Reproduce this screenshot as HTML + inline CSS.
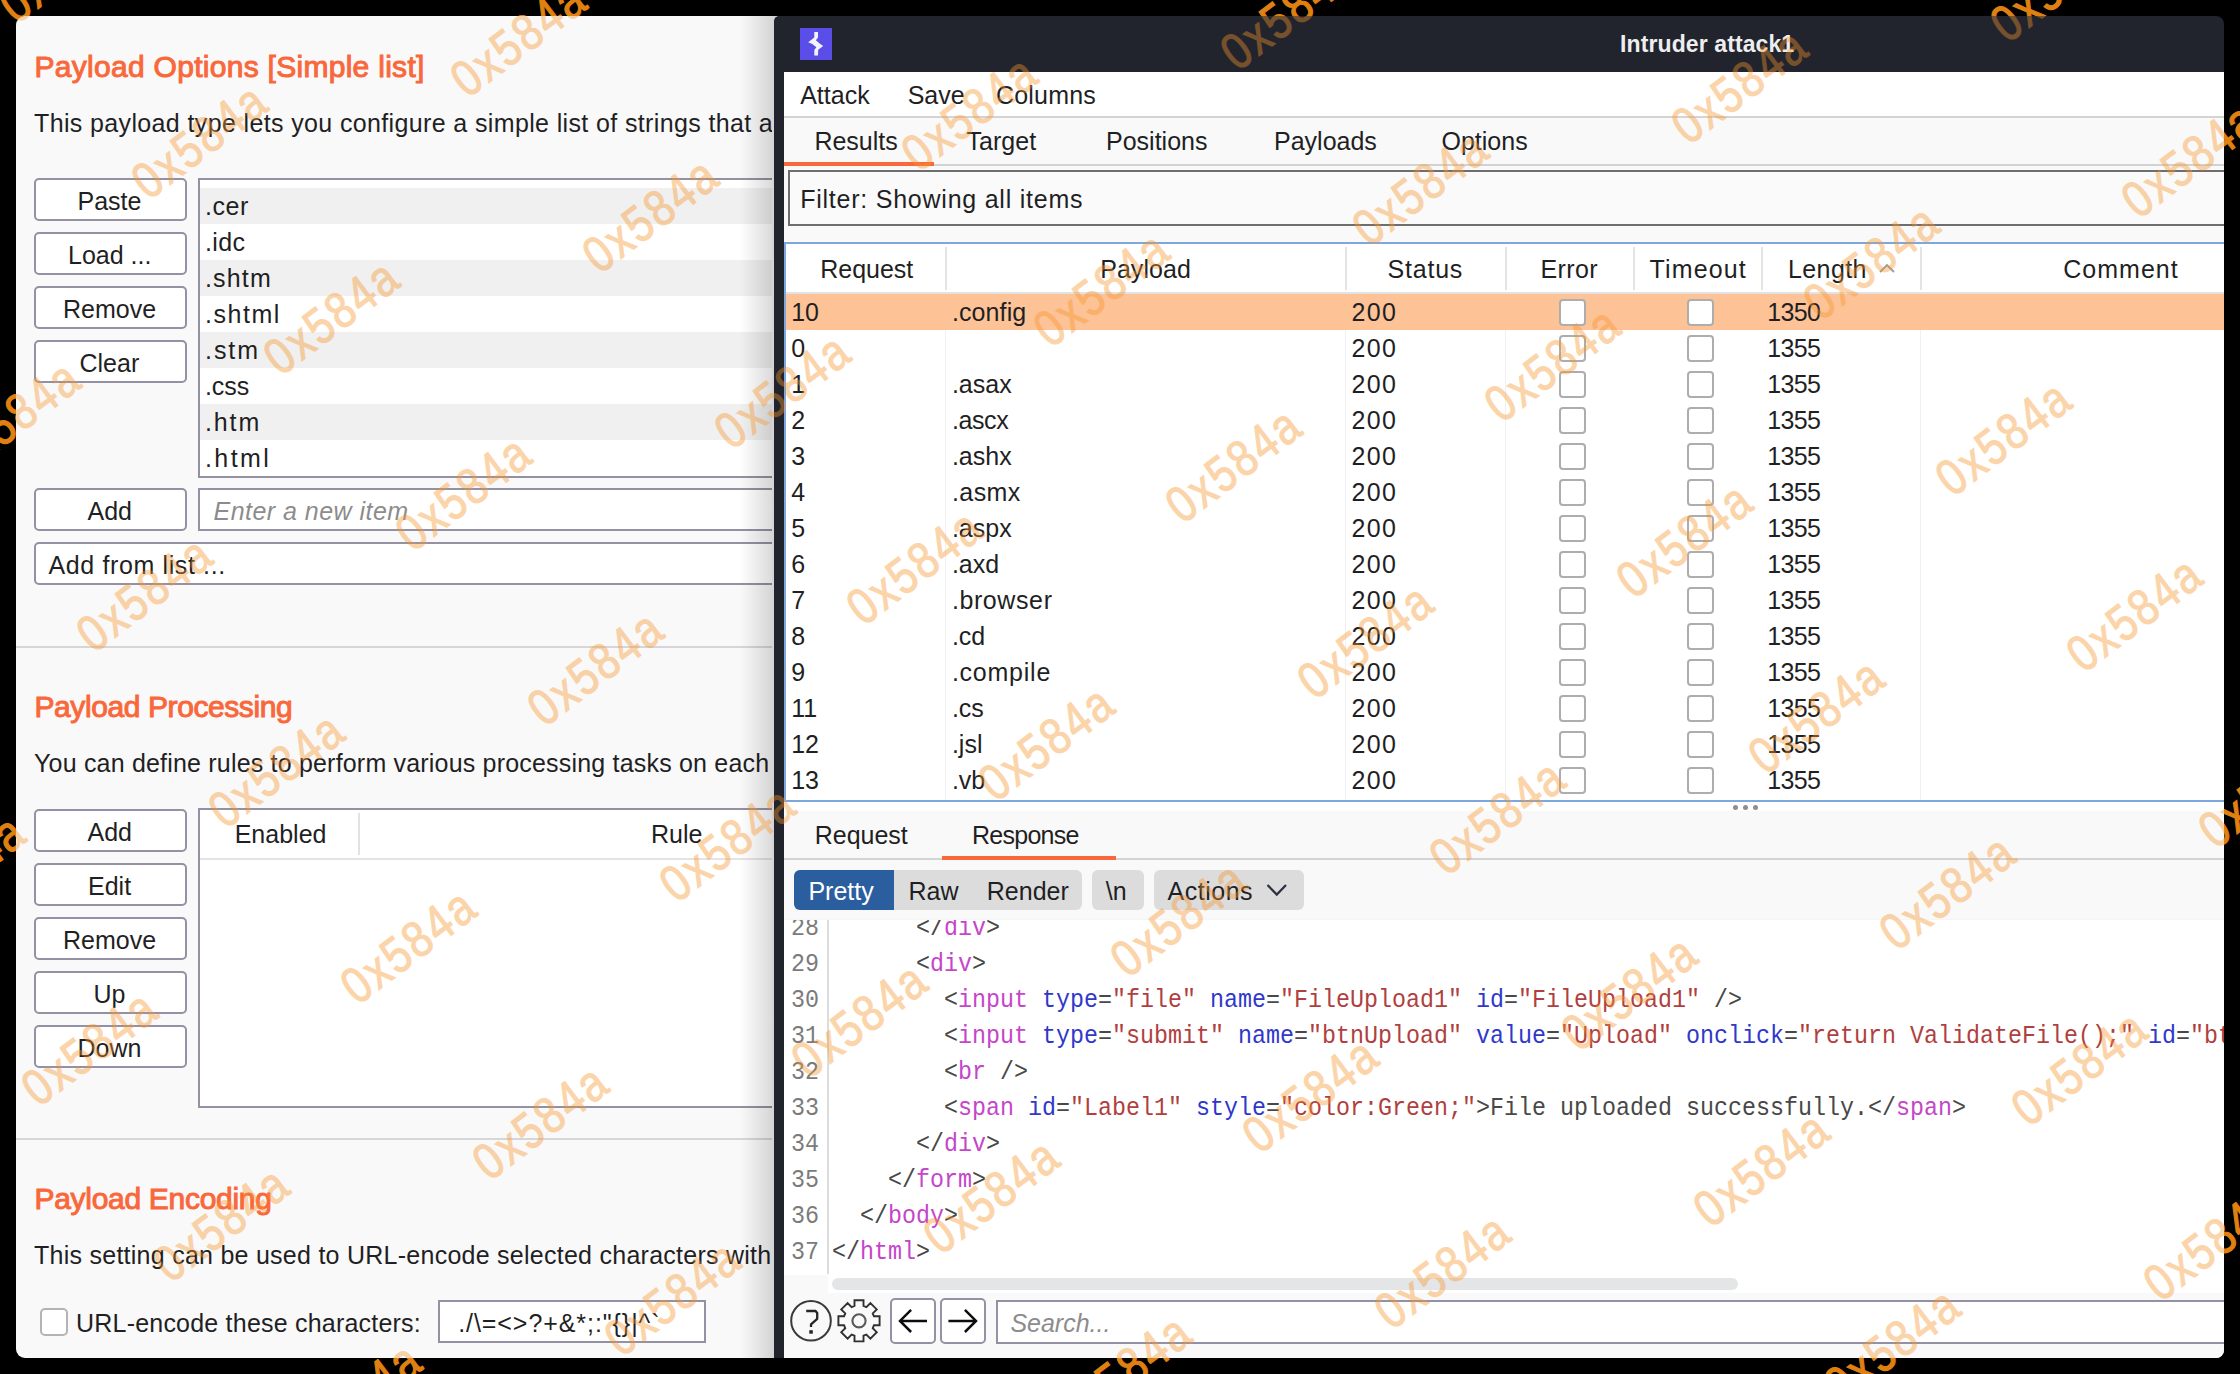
<!DOCTYPE html>
<html><head><meta charset="utf-8"><title>Intruder attack1</title>
<style>
html,body{margin:0;padding:0;overflow:hidden;}
body{width:2240px;height:1374px;background:#000;position:relative;overflow:hidden;font-family:"Liberation Sans", sans-serif;}
.t{position:absolute;white-space:pre;line-height:0;height:0;}
.m{position:absolute;white-space:pre;line-height:0;height:0;font-family:"Liberation Mono", monospace;font-size:25.4px;transform:scaleX(0.91864);transform-origin:0 0;}
.r{position:absolute;}
.clip{position:absolute;overflow:hidden;}
.panel{position:absolute;background:#f9f9fa;border-radius:9px;overflow:hidden;}
.win{position:absolute;background:#21242d;border-radius:9px;}
.wma,.wmb{position:absolute;width:200px;height:60px;line-height:60px;text-align:center;font-size:51px;transform:rotate(-37deg) scaleX(0.84);letter-spacing:2.8px;white-space:pre;pointer-events:none;-webkit-text-stroke:1.1px currentColor;}
.wma{color:rgb(208,114,0);}
.wmb{color:rgb(247,150,44);}
#wB{opacity:0.4;}
#wA,#wB{position:absolute;left:0;top:0;width:2240px;height:1374px;overflow:hidden;}
#ui{position:absolute;left:0;top:0;width:2240px;height:1374px;}
.layer{position:absolute;left:0;top:0;width:2240px;height:1374px;}
</style></head>
<body>
<div id="wA">
<div class="wma" style="left:-32.0px;top:-65.4px">0x584a</div>
<div class="wma" style="left:287.0px;top:-167.1px">0x584a</div>
<div class="wma" style="left:-218.9px;top:212.2px">0x584a</div>
<div class="wma" style="left:100.0px;top:110.5px">0x584a</div>
<div class="wma" style="left:418.9px;top:8.9px">0x584a</div>
<div class="wma" style="left:737.8px;top:-92.7px">0x584a</div>
<div class="wma" style="left:-87.0px;top:388.1px">0x584a</div>
<div class="wma" style="left:231.9px;top:286.5px">0x584a</div>
<div class="wma" style="left:550.8px;top:184.9px">0x584a</div>
<div class="wma" style="left:869.8px;top:83.3px">0x584a</div>
<div class="wma" style="left:1188.7px;top:-18.4px">0x584a</div>
<div class="wma" style="left:1507.6px;top:-120.0px">0x584a</div>
<div class="wma" style="left:45.0px;top:564.1px">0x584a</div>
<div class="wma" style="left:363.9px;top:462.5px">0x584a</div>
<div class="wma" style="left:682.8px;top:360.9px">0x584a</div>
<div class="wma" style="left:1001.7px;top:259.2px">0x584a</div>
<div class="wma" style="left:1320.6px;top:157.6px">0x584a</div>
<div class="wma" style="left:1639.6px;top:56.0px">0x584a</div>
<div class="wma" style="left:1958.5px;top:-45.6px">0x584a</div>
<div class="wma" style="left:2277.4px;top:-147.2px">0x584a</div>
<div class="wma" style="left:-142.0px;top:841.7px">0x584a</div>
<div class="wma" style="left:176.9px;top:740.1px">0x584a</div>
<div class="wma" style="left:495.8px;top:638.4px">0x584a</div>
<div class="wma" style="left:814.8px;top:536.8px">0x584a</div>
<div class="wma" style="left:1133.7px;top:435.2px">0x584a</div>
<div class="wma" style="left:1452.6px;top:333.6px">0x584a</div>
<div class="wma" style="left:1771.5px;top:232.0px">0x584a</div>
<div class="wma" style="left:2090.4px;top:130.3px">0x584a</div>
<div class="wma" style="left:-10.1px;top:1017.7px">0x584a</div>
<div class="wma" style="left:308.9px;top:916.0px">0x584a</div>
<div class="wma" style="left:627.8px;top:814.4px">0x584a</div>
<div class="wma" style="left:946.7px;top:712.8px">0x584a</div>
<div class="wma" style="left:1265.6px;top:611.2px">0x584a</div>
<div class="wma" style="left:1584.5px;top:509.5px">0x584a</div>
<div class="wma" style="left:1903.5px;top:407.9px">0x584a</div>
<div class="wma" style="left:2222.4px;top:306.3px">0x584a</div>
<div class="wma" style="left:-197.0px;top:1295.2px">0x584a</div>
<div class="wma" style="left:121.9px;top:1193.6px">0x584a</div>
<div class="wma" style="left:440.8px;top:1092.0px">0x584a</div>
<div class="wma" style="left:759.7px;top:990.4px">0x584a</div>
<div class="wma" style="left:1078.7px;top:888.8px">0x584a</div>
<div class="wma" style="left:1397.6px;top:787.1px">0x584a</div>
<div class="wma" style="left:1716.5px;top:685.5px">0x584a</div>
<div class="wma" style="left:2035.4px;top:583.9px">0x584a</div>
<div class="wma" style="left:-65.1px;top:1471.2px">0x584a</div>
<div class="wma" style="left:253.8px;top:1369.6px">0x584a</div>
<div class="wma" style="left:572.8px;top:1268.0px">0x584a</div>
<div class="wma" style="left:891.7px;top:1166.3px">0x584a</div>
<div class="wma" style="left:1210.6px;top:1064.7px">0x584a</div>
<div class="wma" style="left:1529.5px;top:963.1px">0x584a</div>
<div class="wma" style="left:1848.4px;top:861.5px">0x584a</div>
<div class="wma" style="left:2167.4px;top:759.9px">0x584a</div>
<div class="wma" style="left:704.7px;top:1443.9px">0x584a</div>
<div class="wma" style="left:1023.6px;top:1342.3px">0x584a</div>
<div class="wma" style="left:1342.5px;top:1240.7px">0x584a</div>
<div class="wma" style="left:1661.5px;top:1139.1px">0x584a</div>
<div class="wma" style="left:1980.4px;top:1037.5px">0x584a</div>
<div class="wma" style="left:2299.3px;top:935.8px">0x584a</div>
<div class="wma" style="left:1474.5px;top:1416.7px">0x584a</div>
<div class="wma" style="left:1793.4px;top:1315.0px">0x584a</div>
<div class="wma" style="left:2112.3px;top:1213.4px">0x584a</div>
<div class="wma" style="left:2244.3px;top:1389.4px">0x584a</div>
</div>
<div id="ui">
<div class="r" style="left:16px;top:16px;width:800px;height:1342px;background:#f9f9fa;border-radius:9px;"></div>
<div class="layer" style="clip-path:inset(16px 1468px 16px 16px round 9px);">
<div class="t" style="left:34.50px;top:67.40px;font-size:30px;color:#f9683a;letter-spacing:0.286px;-webkit-text-stroke:1px currentColor;">Payload Options [Simple list]</div>
<div class="t" style="left:34.00px;top:123.33px;font-size:25px;color:#1f1f24;letter-spacing:0.366px;">This payload type lets you configure a simple list of strings that are used as payloads.</div>
<div class="r" style="left:34px;top:178px;width:153px;height:43px;background:#fff;border:2px solid #9391a3;border-radius:5px;box-sizing:border-box;"></div>
<div class="t" style="left:77.50px;top:201.33px;font-size:25px;color:#1f1f24;">Paste</div>
<div class="r" style="left:34px;top:232px;width:153px;height:43px;background:#fff;border:2px solid #9391a3;border-radius:5px;box-sizing:border-box;"></div>
<div class="t" style="left:68.00px;top:255.33px;font-size:25px;color:#1f1f24;">Load ...</div>
<div class="r" style="left:34px;top:286px;width:153px;height:43px;background:#fff;border:2px solid #9391a3;border-radius:5px;box-sizing:border-box;"></div>
<div class="t" style="left:63.00px;top:309.33px;font-size:25px;color:#1f1f24;">Remove</div>
<div class="r" style="left:34px;top:340px;width:153px;height:43px;background:#fff;border:2px solid #9391a3;border-radius:5px;box-sizing:border-box;"></div>
<div class="t" style="left:79.50px;top:363.33px;font-size:25px;color:#1f1f24;">Clear</div>
<div class="r" style="left:198px;top:178px;width:700px;height:300px;background:#fff;border:2px solid #9391a3;box-sizing:border-box;"></div>
<div class="r" style="left:200px;top:188px;width:700px;height:36px;background:#f0f0f0;"></div>
<div class="t" style="left:205.00px;top:206.33px;font-size:25px;color:#1f1f24;letter-spacing:0.567px;">.cer</div>
<div class="t" style="left:205.00px;top:242.33px;font-size:25px;color:#1f1f24;letter-spacing:0.333px;">.idc</div>
<div class="r" style="left:200px;top:260px;width:700px;height:36px;background:#f0f0f0;"></div>
<div class="t" style="left:205.00px;top:278.33px;font-size:25px;color:#1f1f24;letter-spacing:1.150px;">.shtm</div>
<div class="t" style="left:205.00px;top:314.33px;font-size:25px;color:#1f1f24;letter-spacing:1.540px;">.shtml</div>
<div class="r" style="left:200px;top:332px;width:700px;height:36px;background:#f0f0f0;"></div>
<div class="t" style="left:205.00px;top:350.33px;font-size:25px;color:#1f1f24;letter-spacing:1.933px;">.stm</div>
<div class="t" style="left:205.00px;top:386.33px;font-size:25px;color:#1f1f24;letter-spacing:-0.100px;">.css</div>
<div class="r" style="left:200px;top:404px;width:700px;height:36px;background:#f0f0f0;"></div>
<div class="t" style="left:205.00px;top:422.33px;font-size:25px;color:#1f1f24;letter-spacing:1.867px;">.htm</div>
<div class="t" style="left:205.00px;top:458.33px;font-size:25px;color:#1f1f24;letter-spacing:2.425px;">.html</div>
<div class="r" style="left:34px;top:488px;width:153px;height:43px;background:#fff;border:2px solid #9391a3;border-radius:5px;box-sizing:border-box;"></div>
<div class="t" style="left:87.50px;top:510.83px;font-size:25px;color:#1f1f24;">Add</div>
<div class="r" style="left:198px;top:488px;width:700px;height:43px;background:#fff;border:2px solid #9391a3;box-sizing:border-box;"></div>
<div class="t" style="left:213.50px;top:510.83px;font-size:25px;color:#8c8c8c;font-style:italic;letter-spacing:0.467px;">Enter a new item</div>
<div class="r" style="left:34px;top:542px;width:860px;height:43px;background:#fff;border:2px solid #9391a3;border-radius:5px;box-sizing:border-box;"></div>
<div class="t" style="left:48.50px;top:564.93px;font-size:25px;color:#1f1f24;letter-spacing:0.625px;">Add from list ...</div>
<div class="r" style="left:16px;top:646px;width:800px;height:2px;background:#d6d6d9;"></div>
<div class="t" style="left:34.50px;top:707.10px;font-size:30px;color:#f9683a;letter-spacing:-0.412px;-webkit-text-stroke:1px currentColor;">Payload Processing</div>
<div class="t" style="left:34.00px;top:762.63px;font-size:25px;color:#1f1f24;letter-spacing:0.190px;">You can define rules to perform various processing tasks on each payload before it is used.</div>
<div class="r" style="left:34px;top:808.5px;width:153px;height:43px;background:#fff;border:2px solid #9391a3;border-radius:5px;box-sizing:border-box;"></div>
<div class="t" style="left:87.50px;top:832.13px;font-size:25px;color:#1f1f24;">Add</div>
<div class="r" style="left:34px;top:862.5px;width:153px;height:43px;background:#fff;border:2px solid #9391a3;border-radius:5px;box-sizing:border-box;"></div>
<div class="t" style="left:88.00px;top:886.13px;font-size:25px;color:#1f1f24;">Edit</div>
<div class="r" style="left:34px;top:916.5px;width:153px;height:43px;background:#fff;border:2px solid #9391a3;border-radius:5px;box-sizing:border-box;"></div>
<div class="t" style="left:63.00px;top:940.13px;font-size:25px;color:#1f1f24;">Remove</div>
<div class="r" style="left:34px;top:970.5px;width:153px;height:43px;background:#fff;border:2px solid #9391a3;border-radius:5px;box-sizing:border-box;"></div>
<div class="t" style="left:93.50px;top:994.13px;font-size:25px;color:#1f1f24;">Up</div>
<div class="r" style="left:34px;top:1024.5px;width:153px;height:43px;background:#fff;border:2px solid #9391a3;border-radius:5px;box-sizing:border-box;"></div>
<div class="t" style="left:77.50px;top:1048.13px;font-size:25px;color:#1f1f24;">Down</div>
<div class="r" style="left:198px;top:808px;width:700px;height:300px;background:#fff;border:2px solid #9391a3;box-sizing:border-box;"></div>
<div class="t" style="left:234.70px;top:834.33px;font-size:25px;color:#1f1f24;">Enabled</div>
<div class="r" style="left:358px;top:813px;width:2px;height:42px;background:#e2e2e2;"></div>
<div class="r" style="left:200px;top:857.5px;width:700px;height:2px;background:#e4e4e4;"></div>
<div class="t" style="left:651.00px;top:834.33px;font-size:25px;color:#1f1f24;">Rule</div>
<div class="r" style="left:16px;top:1138px;width:800px;height:2px;background:#d6d6d9;"></div>
<div class="t" style="left:34.50px;top:1199.10px;font-size:30px;color:#f9683a;letter-spacing:-0.300px;-webkit-text-stroke:1px currentColor;">Payload Encoding</div>
<div class="t" style="left:34.00px;top:1255.33px;font-size:25px;color:#1f1f24;letter-spacing:0.258px;">This setting can be used to URL-encode selected characters within the final payload.</div>
<div class="r" style="left:40px;top:1308px;width:28px;height:28px;background:#fff;border:2px solid #b4b4b4;border-radius:5px;box-sizing:border-box;"></div>
<div class="t" style="left:76.00px;top:1322.83px;font-size:25px;color:#1f1f24;letter-spacing:0.211px;">URL-encode these characters:</div>
<div class="r" style="left:438px;top:1300px;width:268px;height:43px;background:#fff;border:2px solid #9391a3;box-sizing:border-box;"></div>
<div class="t" style="left:458.20px;top:1323.13px;font-size:25px;color:#1f1f24;letter-spacing:0.929px;">./\=&lt;&gt;?+&amp;*;:&quot;{}|^`</div>
</div>
<div class="r" style="left:740px;top:16px;width:36px;height:1342px;background:linear-gradient(to right, rgba(0,0,0,0), rgba(0,0,0,0.16));"></div>
<div class="layer" style="clip-path:inset(16px 16px 16px 774px round 5px 8px 8px 0px);">
<div class="r" style="left:774px;top:16px;width:1450px;height:1342px;background:#21242d;"></div>
<svg class="r" style="left:800px;top:28px" width="32" height="32" viewBox="0 0 32 32"><rect width="32" height="32" fill="#5b4ee8"/><path d="M14.3 4 L18 4 L18 9.5 L15.9 12.2 L19.6 15.4 L23.2 18 L18.2 21.8 L18 27.6 L14.3 27.6 L14.3 22 L16.4 19.3 L12.3 16.1 L8.2 14.3 L14.3 9.5 Z" fill="#f4f2ff"/></svg>
<div class="t" style="left:1620.10px;top:43.63px;font-size:23px;color:#eeeef0;font-weight:bold;letter-spacing:0.100px;">Intruder attack1</div>
<div class="r" style="left:784px;top:72px;width:1440px;height:1286px;background:#f9f9f9;"></div>
<div class="r" style="left:784px;top:72px;width:1440px;height:44px;background:#ffffff;"></div>
<div class="r" style="left:784px;top:116px;width:1440px;height:2px;background:#d4d4d4;"></div>
<div class="t" style="left:800.20px;top:95.13px;font-size:25px;color:#1f1f24;">Attack</div>
<div class="t" style="left:907.70px;top:95.13px;font-size:25px;color:#1f1f24;">Save</div>
<div class="t" style="left:996.00px;top:95.13px;font-size:25px;color:#1f1f24;letter-spacing:0.200px;">Columns</div>
<div class="r" style="left:784px;top:118px;width:1440px;height:47px;background:#f9f9f9;"></div>
<div class="r" style="left:784px;top:164px;width:1440px;height:2px;background:#d2d2d2;"></div>
<div class="r" style="left:784px;top:161.5px;width:150px;height:4.5px;background:#f9683a;"></div>
<div class="t" style="left:814.40px;top:140.93px;font-size:25px;color:#1f1f24;">Results</div>
<div class="t" style="left:966.60px;top:140.93px;font-size:25px;color:#1f1f24;">Target</div>
<div class="t" style="left:1106.00px;top:140.93px;font-size:25px;color:#1f1f24;">Positions</div>
<div class="t" style="left:1274.00px;top:140.93px;font-size:25px;color:#1f1f24;">Payloads</div>
<div class="t" style="left:1441.50px;top:140.93px;font-size:25px;color:#1f1f24;">Options</div>
<div class="r" style="left:788px;top:170px;width:1450px;height:56px;background:#fafafa;border:2px solid #6e6e6e;box-sizing:border-box;"></div>
<div class="t" style="left:800.20px;top:198.83px;font-size:25px;color:#1f1f24;letter-spacing:0.763px;">Filter: Showing all items</div>
<div class="r" style="left:784px;top:242px;width:1440px;height:560px;background:#fff;"></div>
<div class="r" style="left:784px;top:242px;width:1440px;height:2px;background:#7ea8dc;"></div>
<div class="r" style="left:784px;top:800px;width:1440px;height:2px;background:#7ea8dc;"></div>
<div class="r" style="left:784px;top:242px;width:2px;height:560px;background:#7ea8dc;"></div>
<div class="r" style="left:786px;top:292px;width:1438px;height:2px;background:#e2e2e2;"></div>
<div class="r" style="left:945px;top:247px;width:2px;height:43px;background:#e4e4e4;"></div>
<div class="r" style="left:1345px;top:247px;width:2px;height:43px;background:#e4e4e4;"></div>
<div class="r" style="left:1505px;top:247px;width:2px;height:43px;background:#e4e4e4;"></div>
<div class="r" style="left:1633px;top:247px;width:2px;height:43px;background:#e4e4e4;"></div>
<div class="r" style="left:1761px;top:247px;width:2px;height:43px;background:#e4e4e4;"></div>
<div class="r" style="left:1920px;top:247px;width:2px;height:43px;background:#e4e4e4;"></div>
<div class="r" style="left:945px;top:294px;width:1px;height:506px;background:#f0f0f0;"></div>
<div class="r" style="left:1345px;top:294px;width:1px;height:506px;background:#f0f0f0;"></div>
<div class="r" style="left:1505px;top:294px;width:1px;height:506px;background:#f0f0f0;"></div>
<div class="r" style="left:1920px;top:294px;width:1px;height:506px;background:#f0f0f0;"></div>
<div class="t" style="left:820.20px;top:268.83px;font-size:25px;color:#1f1f24;">Request</div>
<div class="t" style="left:1100.20px;top:268.83px;font-size:25px;color:#1f1f24;letter-spacing:0.050px;">Payload</div>
<div class="t" style="left:1387.40px;top:268.83px;font-size:25px;color:#1f1f24;letter-spacing:0.820px;">Status</div>
<div class="t" style="left:1540.60px;top:268.83px;font-size:25px;color:#1f1f24;letter-spacing:0.350px;">Error</div>
<div class="t" style="left:1649.60px;top:268.83px;font-size:25px;color:#1f1f24;letter-spacing:1.133px;">Timeout</div>
<div class="t" style="left:1788.00px;top:268.83px;font-size:25px;color:#1f1f24;letter-spacing:0.400px;">Length</div>
<svg class="r" style="left:1878px;top:262px" width="18" height="12" viewBox="0 0 18 12"><path d="M2 10 L9 3 L16 10" fill="none" stroke="#9a9a9a" stroke-width="1.8"/></svg>
<div class="t" style="left:2063.30px;top:268.83px;font-size:25px;color:#1f1f24;letter-spacing:1.000px;">Comment</div>
<div class="r" style="left:786px;top:294px;width:1438px;height:36px;background:#fdc397;"></div>
<div class="t" style="left:791.20px;top:312.03px;font-size:25px;color:#1f1f24;">10</div>
<div class="t" style="left:951.90px;top:312.03px;font-size:25px;color:#1f1f24;letter-spacing:0.117px;">.config</div>
<div class="t" style="left:1351.40px;top:312.03px;font-size:25px;color:#1f1f24;letter-spacing:1.400px;">200</div>
<div class="r" style="left:1558.5px;top:298.5px;width:27px;height:27px;background:#fff;border:2px solid #adadad;border-radius:4px;box-sizing:border-box;"></div>
<div class="r" style="left:1686.5px;top:298.5px;width:27px;height:27px;background:#fff;border:2px solid #adadad;border-radius:4px;box-sizing:border-box;"></div>
<div class="t" style="left:1767.20px;top:312.03px;font-size:25px;color:#1f1f24;letter-spacing:-0.667px;">1350</div>
<div class="t" style="left:791.20px;top:348.03px;font-size:25px;color:#1f1f24;">0</div>
<div class="t" style="left:1351.40px;top:348.03px;font-size:25px;color:#1f1f24;letter-spacing:1.400px;">200</div>
<div class="r" style="left:1558.5px;top:334.5px;width:27px;height:27px;background:#fff;border:2px solid #adadad;border-radius:4px;box-sizing:border-box;"></div>
<div class="r" style="left:1686.5px;top:334.5px;width:27px;height:27px;background:#fff;border:2px solid #adadad;border-radius:4px;box-sizing:border-box;"></div>
<div class="t" style="left:1767.20px;top:348.03px;font-size:25px;color:#1f1f24;letter-spacing:-0.667px;">1355</div>
<div class="t" style="left:791.20px;top:384.03px;font-size:25px;color:#1f1f24;">1</div>
<div class="t" style="left:951.90px;top:384.03px;font-size:25px;color:#1f1f24;">.asax</div>
<div class="t" style="left:1351.40px;top:384.03px;font-size:25px;color:#1f1f24;letter-spacing:1.400px;">200</div>
<div class="r" style="left:1558.5px;top:370.5px;width:27px;height:27px;background:#fff;border:2px solid #adadad;border-radius:4px;box-sizing:border-box;"></div>
<div class="r" style="left:1686.5px;top:370.5px;width:27px;height:27px;background:#fff;border:2px solid #adadad;border-radius:4px;box-sizing:border-box;"></div>
<div class="t" style="left:1767.20px;top:384.03px;font-size:25px;color:#1f1f24;letter-spacing:-0.667px;">1355</div>
<div class="t" style="left:791.20px;top:420.03px;font-size:25px;color:#1f1f24;">2</div>
<div class="t" style="left:951.90px;top:420.03px;font-size:25px;color:#1f1f24;letter-spacing:-0.375px;">.ascx</div>
<div class="t" style="left:1351.40px;top:420.03px;font-size:25px;color:#1f1f24;letter-spacing:1.400px;">200</div>
<div class="r" style="left:1558.5px;top:406.5px;width:27px;height:27px;background:#fff;border:2px solid #adadad;border-radius:4px;box-sizing:border-box;"></div>
<div class="r" style="left:1686.5px;top:406.5px;width:27px;height:27px;background:#fff;border:2px solid #adadad;border-radius:4px;box-sizing:border-box;"></div>
<div class="t" style="left:1767.20px;top:420.03px;font-size:25px;color:#1f1f24;letter-spacing:-0.667px;">1355</div>
<div class="t" style="left:791.20px;top:456.03px;font-size:25px;color:#1f1f24;">3</div>
<div class="t" style="left:951.90px;top:456.03px;font-size:25px;color:#1f1f24;">.ashx</div>
<div class="t" style="left:1351.40px;top:456.03px;font-size:25px;color:#1f1f24;letter-spacing:1.400px;">200</div>
<div class="r" style="left:1558.5px;top:442.5px;width:27px;height:27px;background:#fff;border:2px solid #adadad;border-radius:4px;box-sizing:border-box;"></div>
<div class="r" style="left:1686.5px;top:442.5px;width:27px;height:27px;background:#fff;border:2px solid #adadad;border-radius:4px;box-sizing:border-box;"></div>
<div class="t" style="left:1767.20px;top:456.03px;font-size:25px;color:#1f1f24;letter-spacing:-0.667px;">1355</div>
<div class="t" style="left:791.20px;top:492.03px;font-size:25px;color:#1f1f24;">4</div>
<div class="t" style="left:951.90px;top:492.03px;font-size:25px;color:#1f1f24;letter-spacing:0.450px;">.asmx</div>
<div class="t" style="left:1351.40px;top:492.03px;font-size:25px;color:#1f1f24;letter-spacing:1.400px;">200</div>
<div class="r" style="left:1558.5px;top:478.5px;width:27px;height:27px;background:#fff;border:2px solid #adadad;border-radius:4px;box-sizing:border-box;"></div>
<div class="r" style="left:1686.5px;top:478.5px;width:27px;height:27px;background:#fff;border:2px solid #adadad;border-radius:4px;box-sizing:border-box;"></div>
<div class="t" style="left:1767.20px;top:492.03px;font-size:25px;color:#1f1f24;letter-spacing:-0.667px;">1355</div>
<div class="t" style="left:791.20px;top:528.03px;font-size:25px;color:#1f1f24;">5</div>
<div class="t" style="left:951.90px;top:528.03px;font-size:25px;color:#1f1f24;">.aspx</div>
<div class="t" style="left:1351.40px;top:528.03px;font-size:25px;color:#1f1f24;letter-spacing:1.400px;">200</div>
<div class="r" style="left:1558.5px;top:514.5px;width:27px;height:27px;background:#fff;border:2px solid #adadad;border-radius:4px;box-sizing:border-box;"></div>
<div class="r" style="left:1686.5px;top:514.5px;width:27px;height:27px;background:#fff;border:2px solid #adadad;border-radius:4px;box-sizing:border-box;"></div>
<div class="t" style="left:1767.20px;top:528.03px;font-size:25px;color:#1f1f24;letter-spacing:-0.667px;">1355</div>
<div class="t" style="left:791.20px;top:564.03px;font-size:25px;color:#1f1f24;">6</div>
<div class="t" style="left:951.90px;top:564.03px;font-size:25px;color:#1f1f24;">.axd</div>
<div class="t" style="left:1351.40px;top:564.03px;font-size:25px;color:#1f1f24;letter-spacing:1.400px;">200</div>
<div class="r" style="left:1558.5px;top:550.5px;width:27px;height:27px;background:#fff;border:2px solid #adadad;border-radius:4px;box-sizing:border-box;"></div>
<div class="r" style="left:1686.5px;top:550.5px;width:27px;height:27px;background:#fff;border:2px solid #adadad;border-radius:4px;box-sizing:border-box;"></div>
<div class="t" style="left:1767.20px;top:564.03px;font-size:25px;color:#1f1f24;letter-spacing:-0.667px;">1355</div>
<div class="t" style="left:791.20px;top:600.03px;font-size:25px;color:#1f1f24;">7</div>
<div class="t" style="left:951.90px;top:600.03px;font-size:25px;color:#1f1f24;letter-spacing:0.600px;">.browser</div>
<div class="t" style="left:1351.40px;top:600.03px;font-size:25px;color:#1f1f24;letter-spacing:1.400px;">200</div>
<div class="r" style="left:1558.5px;top:586.5px;width:27px;height:27px;background:#fff;border:2px solid #adadad;border-radius:4px;box-sizing:border-box;"></div>
<div class="r" style="left:1686.5px;top:586.5px;width:27px;height:27px;background:#fff;border:2px solid #adadad;border-radius:4px;box-sizing:border-box;"></div>
<div class="t" style="left:1767.20px;top:600.03px;font-size:25px;color:#1f1f24;letter-spacing:-0.667px;">1355</div>
<div class="t" style="left:791.20px;top:636.03px;font-size:25px;color:#1f1f24;">8</div>
<div class="t" style="left:951.90px;top:636.03px;font-size:25px;color:#1f1f24;">.cd</div>
<div class="t" style="left:1351.40px;top:636.03px;font-size:25px;color:#1f1f24;letter-spacing:1.400px;">200</div>
<div class="r" style="left:1558.5px;top:622.5px;width:27px;height:27px;background:#fff;border:2px solid #adadad;border-radius:4px;box-sizing:border-box;"></div>
<div class="r" style="left:1686.5px;top:622.5px;width:27px;height:27px;background:#fff;border:2px solid #adadad;border-radius:4px;box-sizing:border-box;"></div>
<div class="t" style="left:1767.20px;top:636.03px;font-size:25px;color:#1f1f24;letter-spacing:-0.667px;">1355</div>
<div class="t" style="left:791.20px;top:672.03px;font-size:25px;color:#1f1f24;">9</div>
<div class="t" style="left:951.90px;top:672.03px;font-size:25px;color:#1f1f24;letter-spacing:0.757px;">.compile</div>
<div class="t" style="left:1351.40px;top:672.03px;font-size:25px;color:#1f1f24;letter-spacing:1.400px;">200</div>
<div class="r" style="left:1558.5px;top:658.5px;width:27px;height:27px;background:#fff;border:2px solid #adadad;border-radius:4px;box-sizing:border-box;"></div>
<div class="r" style="left:1686.5px;top:658.5px;width:27px;height:27px;background:#fff;border:2px solid #adadad;border-radius:4px;box-sizing:border-box;"></div>
<div class="t" style="left:1767.20px;top:672.03px;font-size:25px;color:#1f1f24;letter-spacing:-0.667px;">1355</div>
<div class="t" style="left:791.20px;top:708.03px;font-size:25px;color:#1f1f24;">11</div>
<div class="t" style="left:951.90px;top:708.03px;font-size:25px;color:#1f1f24;">.cs</div>
<div class="t" style="left:1351.40px;top:708.03px;font-size:25px;color:#1f1f24;letter-spacing:1.400px;">200</div>
<div class="r" style="left:1558.5px;top:694.5px;width:27px;height:27px;background:#fff;border:2px solid #adadad;border-radius:4px;box-sizing:border-box;"></div>
<div class="r" style="left:1686.5px;top:694.5px;width:27px;height:27px;background:#fff;border:2px solid #adadad;border-radius:4px;box-sizing:border-box;"></div>
<div class="t" style="left:1767.20px;top:708.03px;font-size:25px;color:#1f1f24;letter-spacing:-0.667px;">1355</div>
<div class="t" style="left:791.20px;top:744.03px;font-size:25px;color:#1f1f24;">12</div>
<div class="t" style="left:951.90px;top:744.03px;font-size:25px;color:#1f1f24;">.jsl</div>
<div class="t" style="left:1351.40px;top:744.03px;font-size:25px;color:#1f1f24;letter-spacing:1.400px;">200</div>
<div class="r" style="left:1558.5px;top:730.5px;width:27px;height:27px;background:#fff;border:2px solid #adadad;border-radius:4px;box-sizing:border-box;"></div>
<div class="r" style="left:1686.5px;top:730.5px;width:27px;height:27px;background:#fff;border:2px solid #adadad;border-radius:4px;box-sizing:border-box;"></div>
<div class="t" style="left:1767.20px;top:744.03px;font-size:25px;color:#1f1f24;letter-spacing:-0.667px;">1355</div>
<div class="t" style="left:791.20px;top:780.03px;font-size:25px;color:#1f1f24;">13</div>
<div class="t" style="left:951.90px;top:780.03px;font-size:25px;color:#1f1f24;">.vb</div>
<div class="t" style="left:1351.40px;top:780.03px;font-size:25px;color:#1f1f24;letter-spacing:1.400px;">200</div>
<div class="r" style="left:1558.5px;top:766.5px;width:27px;height:27px;background:#fff;border:2px solid #adadad;border-radius:4px;box-sizing:border-box;"></div>
<div class="r" style="left:1686.5px;top:766.5px;width:27px;height:27px;background:#fff;border:2px solid #adadad;border-radius:4px;box-sizing:border-box;"></div>
<div class="t" style="left:1767.20px;top:780.03px;font-size:25px;color:#1f1f24;letter-spacing:-0.667px;">1355</div>
<div class="r" style="left:784px;top:802px;width:1440px;height:9px;background:#ffffff;"></div>
<div class="r" style="left:1732.5px;top:804.5px;width:5px;height:5px;background:#8e8e8e;border-radius:50%;"></div>
<div class="r" style="left:1742.67px;top:804.5px;width:5px;height:5px;background:#8e8e8e;border-radius:50%;"></div>
<div class="r" style="left:1752.84px;top:804.5px;width:5px;height:5px;background:#8e8e8e;border-radius:50%;"></div>
<div class="t" style="left:814.70px;top:835.23px;font-size:25px;color:#1f1f24;">Request</div>
<div class="t" style="left:971.90px;top:835.23px;font-size:25px;color:#1f1f24;letter-spacing:-0.714px;">Response</div>
<div class="r" style="left:784px;top:858px;width:1440px;height:2px;background:#d4d4d4;"></div>
<div class="r" style="left:942px;top:855.5px;width:174.3px;height:4.5px;background:#f9683a;"></div>
<div class="r" style="left:784px;top:860px;width:1440px;height:59px;background:#f9f9f9;"></div>
<div class="r" style="left:794px;top:870px;width:288px;height:40px;background:#dcdcdc;border-radius:6px;"></div>
<div class="r" style="left:794px;top:870px;width:100px;height:40px;background:#2b5e9f;border-radius:6px 0 0 6px;"></div>
<div class="t" style="left:808.40px;top:890.63px;font-size:25px;color:#ffffff;">Pretty</div>
<div class="t" style="left:908.50px;top:890.63px;font-size:25px;color:#1f1f24;">Raw</div>
<div class="t" style="left:986.80px;top:890.63px;font-size:25px;color:#1f1f24;">Render</div>
<div class="r" style="left:1092px;top:870px;width:52px;height:40px;background:#dcdcdc;border-radius:6px;"></div>
<div class="t" style="left:1105.70px;top:890.63px;font-size:25px;color:#1f1f24;">\n</div>
<div class="r" style="left:1154px;top:870px;width:150px;height:40px;background:#dcdcdc;border-radius:6px;"></div>
<div class="t" style="left:1167.60px;top:890.63px;font-size:25px;color:#1f1f24;letter-spacing:0.500px;">Actions</div>
<svg class="r" style="left:1266px;top:882px" width="22" height="16" viewBox="0 0 22 16"><path d="M1.5 3 L10.8 12.5 L20 3" fill="none" stroke="#2e3240" stroke-width="2.3"/></svg>
<div class="r" style="left:784px;top:919px;width:1440px;height:374px;background:#ffffff;"></div>
<div class="r" style="left:784px;top:1275px;width:44px;height:18px;background:#f9f9f9;"></div>
<div class="r" style="left:826.5px;top:919px;width:2px;height:355px;background:#dcdcdc;"></div>
<div class="r" style="left:832px;top:1278px;width:906px;height:12px;background:#e4e5e6;border-radius:6px;"></div>
<div class="clip" style="left:784px;top:919px;width:1440px;height:356px;">
<div class="m" style="left:7.3px;top:9.84px;color:#7b7b7b">28</div>
<div class="m" style="left:131.50px;top:9.84px"><span style="color:#484848">&lt;/</span><span style="color:#c446c9">div</span><span style="color:#484848">&gt;</span></div>
<div class="m" style="left:7.3px;top:45.84px;color:#7b7b7b">29</div>
<div class="m" style="left:131.50px;top:45.84px"><span style="color:#484848">&lt;</span><span style="color:#c446c9">div</span><span style="color:#484848">&gt;</span></div>
<div class="m" style="left:7.3px;top:81.84px;color:#7b7b7b">30</div>
<div class="m" style="left:159.50px;top:81.84px"><span style="color:#484848">&lt;</span><span style="color:#c446c9">input</span><span style="color:#484848"> </span><span style="color:#3038cc">type</span><span style="color:#484848">=</span><span style="color:#b04040">&quot;file&quot;</span><span style="color:#484848"> </span><span style="color:#3038cc">name</span><span style="color:#484848">=</span><span style="color:#b04040">&quot;FileUpload1&quot;</span><span style="color:#484848"> </span><span style="color:#3038cc">id</span><span style="color:#484848">=</span><span style="color:#b04040">&quot;FileUpload1&quot;</span><span style="color:#484848"> /&gt;</span></div>
<div class="m" style="left:7.3px;top:117.84px;color:#7b7b7b">31</div>
<div class="m" style="left:159.50px;top:117.84px"><span style="color:#484848">&lt;</span><span style="color:#c446c9">input</span><span style="color:#484848"> </span><span style="color:#3038cc">type</span><span style="color:#484848">=</span><span style="color:#b04040">&quot;submit&quot;</span><span style="color:#484848"> </span><span style="color:#3038cc">name</span><span style="color:#484848">=</span><span style="color:#b04040">&quot;btnUpload&quot;</span><span style="color:#484848"> </span><span style="color:#3038cc">value</span><span style="color:#484848">=</span><span style="color:#b04040">&quot;Upload&quot;</span><span style="color:#484848"> </span><span style="color:#3038cc">onclick</span><span style="color:#484848">=</span><span style="color:#b04040">&quot;return ValidateFile();&quot;</span><span style="color:#484848"> </span><span style="color:#3038cc">id</span><span style="color:#484848">=</span><span style="color:#b04040">&quot;btnUpload&quot;</span><span style="color:#484848"> /&gt;</span></div>
<div class="m" style="left:7.3px;top:153.84px;color:#7b7b7b">32</div>
<div class="m" style="left:159.50px;top:153.84px"><span style="color:#484848">&lt;</span><span style="color:#c446c9">br</span><span style="color:#484848"> /&gt;</span></div>
<div class="m" style="left:7.3px;top:189.84px;color:#7b7b7b">33</div>
<div class="m" style="left:159.50px;top:189.84px"><span style="color:#484848">&lt;</span><span style="color:#c446c9">span</span><span style="color:#484848"> </span><span style="color:#3038cc">id</span><span style="color:#484848">=</span><span style="color:#b04040">&quot;Label1&quot;</span><span style="color:#484848"> </span><span style="color:#3038cc">style</span><span style="color:#484848">=</span><span style="color:#b04040">&quot;color:Green;&quot;</span><span style="color:#484848">&gt;File uploaded successfully.&lt;/</span><span style="color:#c446c9">span</span><span style="color:#484848">&gt;</span></div>
<div class="m" style="left:7.3px;top:225.84px;color:#7b7b7b">34</div>
<div class="m" style="left:131.50px;top:225.84px"><span style="color:#484848">&lt;/</span><span style="color:#c446c9">div</span><span style="color:#484848">&gt;</span></div>
<div class="m" style="left:7.3px;top:261.84px;color:#7b7b7b">35</div>
<div class="m" style="left:103.50px;top:261.84px"><span style="color:#484848">&lt;/</span><span style="color:#c446c9">form</span><span style="color:#484848">&gt;</span></div>
<div class="m" style="left:7.3px;top:297.84px;color:#7b7b7b">36</div>
<div class="m" style="left:75.50px;top:297.84px"><span style="color:#484848">&lt;/</span><span style="color:#c446c9">body</span><span style="color:#484848">&gt;</span></div>
<div class="m" style="left:7.3px;top:333.84px;color:#7b7b7b">37</div>
<div class="m" style="left:47.50px;top:333.84px"><span style="color:#484848">&lt;/</span><span style="color:#c446c9">html</span><span style="color:#484848">&gt;</span></div>
</div>
<div class="r" style="left:784px;top:919px;width:1440px;height:1px;background:#f6f6f6;"></div>
<div class="r" style="left:784px;top:1293px;width:1440px;height:65px;background:#f9f9f9;"></div>
<svg class="r" style="left:788px;top:1298px" width="46" height="46" viewBox="0 0 46 46"><circle cx="23" cy="22.8" r="19.8" fill="none" stroke="#3a3a3a" stroke-width="2.0"/><path d="M18.2 13 L27.6 13 L29.2 15 L29.2 20.8 L23 26.3 L23 29" fill="none" stroke="#262626" stroke-width="2.3" stroke-linejoin="round"/><rect x="21.3" y="32.2" width="3.5" height="3.5" fill="#262626"/></svg>
<svg class="r" style="left:836px;top:1298px" width="46" height="46" viewBox="0 0 46 46"><path d="M18.50 7.86 L18.50 2.20 L27.50 2.20 L27.50 7.86 L30.38 9.06 L34.38 5.05 L40.75 11.42 L36.74 15.42 L37.94 18.30 L43.60 18.30 L43.60 27.30 L37.94 27.30 L36.74 30.18 L40.75 34.18 L34.38 40.55 L30.38 36.54 L27.50 37.74 L27.50 43.40 L18.50 43.40 L18.50 37.74 L15.62 36.54 L11.62 40.55 L5.25 34.18 L9.26 30.18 L8.06 27.30 L2.40 27.30 L2.40 18.30 L8.06 18.30 L9.26 15.42 L5.25 11.42 L11.62 5.05 L15.62 9.06 Z" fill="none" stroke="#303030" stroke-width="1.9" stroke-linejoin="miter"/><circle cx="23" cy="22.8" r="6.6" fill="none" stroke="#5a5a5a" stroke-width="2.1"/></svg>
<div class="r" style="left:890px;top:1298px;width:46px;height:46px;background:#fff;border:2px solid #9391a3;border-radius:5px;box-sizing:border-box;"></div>
<svg class="r" style="left:890px;top:1298px" width="46" height="46" viewBox="0 0 46 46"><path d="M37 22.9 L10.5 22.9 M21.1 11.8 L10 22.9 L21.1 34" fill="none" stroke="#0d0d0d" stroke-width="2.5" stroke-linecap="butt" stroke-linejoin="miter"/></svg>
<div class="r" style="left:940px;top:1298px;width:46px;height:46px;background:#fff;border:2px solid #9391a3;border-radius:5px;box-sizing:border-box;"></div>
<svg class="r" style="left:940px;top:1298px" width="46" height="46" viewBox="0 0 46 46"><path d="M8.4 22.9 L34.8 22.9 M24.9 11.8 L36 22.9 L24.9 34" fill="none" stroke="#0d0d0d" stroke-width="2.5" stroke-linecap="butt" stroke-linejoin="miter"/></svg>
<div class="r" style="left:996px;top:1300px;width:1300px;height:44px;background:#fff;border:2px solid #9391a3;box-sizing:border-box;"></div>
<div class="t" style="left:1010.40px;top:1322.63px;font-size:25px;color:#8c8c8c;font-style:italic;">Search...</div>
</div>
</div>
<div id="wB">
<div class="wmb" style="left:-32.0px;top:-65.4px">0x584a</div>
<div class="wmb" style="left:287.0px;top:-167.1px">0x584a</div>
<div class="wmb" style="left:-218.9px;top:212.2px">0x584a</div>
<div class="wmb" style="left:100.0px;top:110.5px">0x584a</div>
<div class="wmb" style="left:418.9px;top:8.9px">0x584a</div>
<div class="wmb" style="left:737.8px;top:-92.7px">0x584a</div>
<div class="wmb" style="left:-87.0px;top:388.1px">0x584a</div>
<div class="wmb" style="left:231.9px;top:286.5px">0x584a</div>
<div class="wmb" style="left:550.8px;top:184.9px">0x584a</div>
<div class="wmb" style="left:869.8px;top:83.3px">0x584a</div>
<div class="wmb" style="left:1188.7px;top:-18.4px">0x584a</div>
<div class="wmb" style="left:1507.6px;top:-120.0px">0x584a</div>
<div class="wmb" style="left:45.0px;top:564.1px">0x584a</div>
<div class="wmb" style="left:363.9px;top:462.5px">0x584a</div>
<div class="wmb" style="left:682.8px;top:360.9px">0x584a</div>
<div class="wmb" style="left:1001.7px;top:259.2px">0x584a</div>
<div class="wmb" style="left:1320.6px;top:157.6px">0x584a</div>
<div class="wmb" style="left:1639.6px;top:56.0px">0x584a</div>
<div class="wmb" style="left:1958.5px;top:-45.6px">0x584a</div>
<div class="wmb" style="left:2277.4px;top:-147.2px">0x584a</div>
<div class="wmb" style="left:-142.0px;top:841.7px">0x584a</div>
<div class="wmb" style="left:176.9px;top:740.1px">0x584a</div>
<div class="wmb" style="left:495.8px;top:638.4px">0x584a</div>
<div class="wmb" style="left:814.8px;top:536.8px">0x584a</div>
<div class="wmb" style="left:1133.7px;top:435.2px">0x584a</div>
<div class="wmb" style="left:1452.6px;top:333.6px">0x584a</div>
<div class="wmb" style="left:1771.5px;top:232.0px">0x584a</div>
<div class="wmb" style="left:2090.4px;top:130.3px">0x584a</div>
<div class="wmb" style="left:-10.1px;top:1017.7px">0x584a</div>
<div class="wmb" style="left:308.9px;top:916.0px">0x584a</div>
<div class="wmb" style="left:627.8px;top:814.4px">0x584a</div>
<div class="wmb" style="left:946.7px;top:712.8px">0x584a</div>
<div class="wmb" style="left:1265.6px;top:611.2px">0x584a</div>
<div class="wmb" style="left:1584.5px;top:509.5px">0x584a</div>
<div class="wmb" style="left:1903.5px;top:407.9px">0x584a</div>
<div class="wmb" style="left:2222.4px;top:306.3px">0x584a</div>
<div class="wmb" style="left:-197.0px;top:1295.2px">0x584a</div>
<div class="wmb" style="left:121.9px;top:1193.6px">0x584a</div>
<div class="wmb" style="left:440.8px;top:1092.0px">0x584a</div>
<div class="wmb" style="left:759.7px;top:990.4px">0x584a</div>
<div class="wmb" style="left:1078.7px;top:888.8px">0x584a</div>
<div class="wmb" style="left:1397.6px;top:787.1px">0x584a</div>
<div class="wmb" style="left:1716.5px;top:685.5px">0x584a</div>
<div class="wmb" style="left:2035.4px;top:583.9px">0x584a</div>
<div class="wmb" style="left:-65.1px;top:1471.2px">0x584a</div>
<div class="wmb" style="left:253.8px;top:1369.6px">0x584a</div>
<div class="wmb" style="left:572.8px;top:1268.0px">0x584a</div>
<div class="wmb" style="left:891.7px;top:1166.3px">0x584a</div>
<div class="wmb" style="left:1210.6px;top:1064.7px">0x584a</div>
<div class="wmb" style="left:1529.5px;top:963.1px">0x584a</div>
<div class="wmb" style="left:1848.4px;top:861.5px">0x584a</div>
<div class="wmb" style="left:2167.4px;top:759.9px">0x584a</div>
<div class="wmb" style="left:704.7px;top:1443.9px">0x584a</div>
<div class="wmb" style="left:1023.6px;top:1342.3px">0x584a</div>
<div class="wmb" style="left:1342.5px;top:1240.7px">0x584a</div>
<div class="wmb" style="left:1661.5px;top:1139.1px">0x584a</div>
<div class="wmb" style="left:1980.4px;top:1037.5px">0x584a</div>
<div class="wmb" style="left:2299.3px;top:935.8px">0x584a</div>
<div class="wmb" style="left:1474.5px;top:1416.7px">0x584a</div>
<div class="wmb" style="left:1793.4px;top:1315.0px">0x584a</div>
<div class="wmb" style="left:2112.3px;top:1213.4px">0x584a</div>
<div class="wmb" style="left:2244.3px;top:1389.4px">0x584a</div>
</div>
</body></html>
